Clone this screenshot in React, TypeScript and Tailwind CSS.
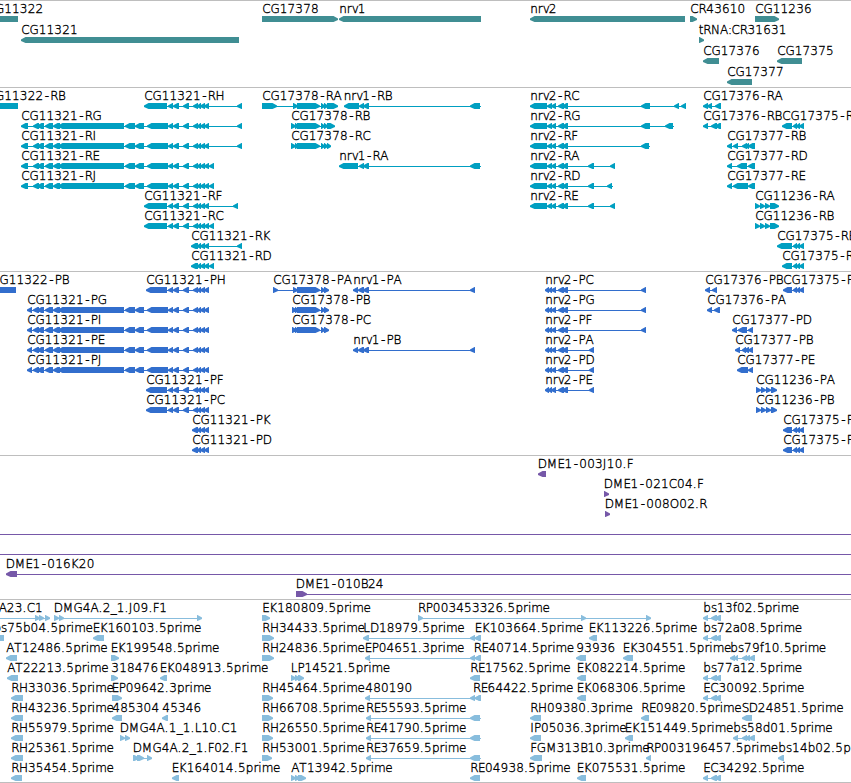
type Span = [number, number];

interface Feature {
  row: number;
  label?: string;
  // label start, when it differs from the first block
  at?: number;
  dir?: 'left' | 'right' | 'none';
  blocks: Span[];
  line?: Span;
}

interface TrackData {
  id: string;
  color: string;
  pitch: number;
  height: string;
  features: Feature[];
}

// Horizontal advance of every glyph used in the labels, at 12px
const ADVANCE: Record<string, number> = {
  A: 8, B: 7.2, C: 8.3, D: 9, E: 6.9, F: 6.5, G: 9.1, H: 9, I: 3.6, J: 4, K: 8,
  L: 6.6, M: 10.8, N: 9, O: 9.5, P: 7, R: 7.7, S: 7, T: 7.6,
  a: 7, b: 7.6, d: 7.6, e: 7, f: 4.2, i: 3.4, m: 11.2, n: 7.5, p: 7.6, r: 4.9,
  s: 6.2, t: 4.4, v: 6, '-': 7, '.': 4.3, ':': 3.6, _: 6,
};
const DIGIT = 7.83;

function glyphPositions(text: string, start: number) {
  let x = start + 0.3;
  return text
    .split('')
    .map((c) => {
      // the hyphen sits in the middle of its wide slot
      const pos = c === '-' ? x + 1.4 : x;
      x += ADVANCE[c] ?? DIGIT;
      return pos.toFixed(2);
    })
    .join(' ');
}

// Exon groups shared between transcripts
const longHead: Span[] = [[33, 39], [37, 44], [45, 53], [53, 60], [58, 124], [125, 135], [135, 144], [147, 168]];
const mid: Span[] = [[168, 173], [173, 179], [183, 189]];
const cluster: Span[] = [[197, 201], [200, 205], [204, 209]];
const tail: Span[] = [...mid, [193, 198], ...cluster];
const nrv2: Span[] = [[547, 552], [551, 556], [558, 564], [562, 568]];
const nrv2P: Span[] = [[545, 549], [548, 552], [551, 556], [558, 564], [562, 568]];
const c78: Span[] = [[297, 320], [321, 325], [324, 328]];
const c75: Span[] = [[793, 797], [796, 800], [799, 804]];
const c36: Span[] = [[755, 760], [760, 765], [765, 770], [770, 779]];
const c36P: Span[] = [[756, 761], [761, 766], [766, 771], [771, 777]];
const bs: Span[] = [[703, 708], [711, 717], [715, 721]];
const bsEnd: Span[] = [[742, 747], [745, 750], [749, 755]];

const tracks: TrackData[] = [
  {
    id: 'genes',
    color: '#408e93',
    pitch: 21,
    height: 'h-[87px]',
    features: [
      { row: 0, label: 'CG11322', at: -13.5, dir: 'none', blocks: [[-13, 18]] },
      { row: 1, label: 'CG11321', blocks: [[21, 239]] },
      { row: 0, label: 'CG17378', dir: 'right', blocks: [[262, 338]] },
      { row: 0, label: 'nrv1', blocks: [[339, 481]] },
      { row: 0, label: 'nrv2', blocks: [[530, 685]] },
      { row: 0, label: 'CR43610', dir: 'right', blocks: [[690, 697]] },
      { row: 0, label: 'CG11236', dir: 'right', blocks: [[755, 779]] },
      { row: 1, label: 'tRNA:CR31631', at: 698.5, dir: 'right', blocks: [[699, 704]] },
      { row: 2, label: 'CG17376', blocks: [[703, 719]] },
      { row: 2, label: 'CG17375', blocks: [[777, 802]] },
      { row: 3, label: 'CG17377', blocks: [[727, 752]] },
    ],
  },
  {
    id: 'transcripts',
    color: '#009fc1',
    pitch: 20,
    height: 'h-[184px]',
    features: [
      { row: 0, label: 'CG11322-RB', at: -13.5, dir: 'none', blocks: [[-13, 18]] },
      { row: 0, label: 'CG11321-RH', blocks: [[144, 167], ...tail, [237, 242]] },
      { row: 1, label: 'CG11321-RG', blocks: [[21, 28], ...longHead, ...tail, [237, 242]] },
      { row: 2, label: 'CG11321-RI', blocks: [[21, 28], ...longHead, ...tail, [237, 242]] },
      { row: 3, label: 'CG11321-RE', blocks: [[21, 28], ...longHead, ...tail, [209, 214]] },
      { row: 4, label: 'CG11321-RJ', blocks: [[21, 28], ...longHead, ...tail, [209, 214]] },
      { row: 5, label: 'CG11321-RF', blocks: [[144, 167], ...tail, [233, 238]] },
      { row: 6, label: 'CG11321-RC', blocks: [[144, 167], ...tail, [209, 214]] },
      { row: 7, label: 'CG11321-RK', blocks: [[191, 198], ...cluster, [237, 242]] },
      { row: 8, label: 'CG11321-RD', blocks: [[191, 198], ...cluster, [209, 214]] },
      { row: 0, label: 'CG17378-RA', dir: 'right', blocks: [[262, 277], [293, 298], ...c78, [327, 338]] },
      { row: 1, label: 'CG17378-RB', dir: 'right', blocks: [[291, 296], [295, 299], ...c78, [327, 335]] },
      { row: 2, label: 'CG17378-RC', dir: 'right', blocks: [[291, 296], [295, 299], ...c78, [327, 331]] },
      { row: 0, label: 'nrv1-RB', at: 343.5, blocks: [[344, 359], [359, 364], [363, 369], [470, 480]], line: [344, 481] },
      { row: 3, label: 'nrv1-RA', blocks: [[339, 358], [359, 364], [363, 369], [470, 480]], line: [339, 481] },
      { row: 0, label: 'nrv2-RC', blocks: [[530, 547], ...nrv2, [641, 650], [674, 679], [681, 686]] },
      { row: 1, label: 'nrv2-RG', blocks: [[530, 547], ...nrv2, [641, 650], [665, 673]], line: [530, 674] },
      { row: 2, label: 'nrv2-RF', blocks: [[530, 547], ...nrv2, [641, 649]], line: [530, 650] },
      { row: 3, label: 'nrv2-RA', blocks: [[530, 547], ...nrv2, [588, 594], [610, 615]] },
      { row: 4, label: 'nrv2-RD', blocks: [[530, 547], ...nrv2, [588, 594], [607, 612]], line: [530, 613] },
      { row: 5, label: 'nrv2-RE', blocks: [[530, 547], ...nrv2, [588, 594], [610, 615]] },
      { row: 0, label: 'CG17376-RA', blocks: [[703, 708], [707, 712], [715, 721]] },
      { row: 1, label: 'CG17376-RB', blocks: [[703, 708], [711, 717], [715, 721]] },
      { row: 1, label: 'CG17375-RA', blocks: [[782, 792], ...c75] },
      { row: 2, label: 'CG17377-RB', blocks: [[727, 732], [733, 738], [742, 747], [745, 749], [748, 755]] },
      { row: 3, label: 'CG17377-RD', blocks: [[727, 732], [737, 747], [748, 755]] },
      { row: 4, label: 'CG17377-RE', blocks: [[727, 732], [733, 748], [748, 755]] },
      { row: 5, label: 'CG11236-RA', dir: 'right', blocks: c36 },
      { row: 6, label: 'CG11236-RB', dir: 'right', blocks: c36 },
      { row: 7, label: 'CG17375-RB', blocks: [[777, 792], ...c75] },
      { row: 8, label: 'CG17375-RC', blocks: [[782, 792], ...c75] },
    ],
  },
  {
    id: 'proteins',
    color: '#326ecd',
    pitch: 20,
    height: 'h-[184px]',
    features: [
      { row: 0, label: 'CG11322-PB', at: -9, dir: 'none', blocks: [[-9, 16]] },
      { row: 0, label: 'CG11321-PH', blocks: [[146, 167], ...tail] },
      { row: 1, label: 'CG11321-PG', blocks: [[27, 32], ...longHead, ...tail] },
      { row: 2, label: 'CG11321-PI', blocks: [[27, 32], ...longHead, ...tail] },
      { row: 3, label: 'CG11321-PE', blocks: [[27, 32], ...longHead, ...tail] },
      { row: 4, label: 'CG11321-PJ', blocks: [[27, 32], ...longHead, ...tail] },
      { row: 5, label: 'CG11321-PF', blocks: [[146, 167], ...tail] },
      { row: 6, label: 'CG11321-PC', blocks: [[146, 167], ...tail] },
      { row: 7, label: 'CG11321-PK', blocks: [[192, 198], ...cluster] },
      { row: 8, label: 'CG11321-PD', blocks: [[192, 198], ...cluster] },
      { row: 0, label: 'CG17378-PA', dir: 'right', blocks: [[273, 278], [293, 298], ...c78, [324, 329]] },
      { row: 1, label: 'CG17378-PB', dir: 'right', blocks: [[292, 297], [295, 299], ...c78, [324, 329]] },
      { row: 2, label: 'CG17378-PC', dir: 'right', blocks: [[292, 297], [295, 299], ...c78, [324, 329]] },
      { row: 0, label: 'nrv1-PA', blocks: [[353, 358], [358, 364], [363, 369], [470, 475]] },
      { row: 3, label: 'nrv1-PB', blocks: [[353, 358], [358, 364], [363, 369], [470, 475]] },
      { row: 0, label: 'nrv2-PC', blocks: [...nrv2P, [641, 646]] },
      { row: 1, label: 'nrv2-PG', blocks: [...nrv2P, [641, 646]] },
      { row: 2, label: 'nrv2-PF', blocks: [...nrv2P, [641, 646]] },
      { row: 3, label: 'nrv2-PA', blocks: [...nrv2P, [589, 594]] },
      { row: 4, label: 'nrv2-PD', blocks: [...nrv2P, [589, 594]] },
      { row: 5, label: 'nrv2-PE', blocks: [...nrv2P, [589, 594]] },
      { row: 0, label: 'CG17376-PB', blocks: [[705, 710], [712, 717]] },
      { row: 0, label: 'CG17375-PA', blocks: [[783, 792], ...c75] },
      { row: 1, label: 'CG17376-PA', blocks: [[707, 712], [714, 720]] },
      { row: 2, label: 'CG17377-PD', blocks: [[732, 737], [738, 747], [748, 753]] },
      { row: 3, label: 'CG17377-PB', blocks: [[735, 740], [742, 746], [744, 749], [748, 753]] },
      { row: 4, label: 'CG17377-PE', blocks: [[737, 748], [748, 753]] },
      { row: 5, label: 'CG11236-PA', dir: 'right', blocks: c36P },
      { row: 6, label: 'CG11236-PB', dir: 'right', blocks: c36P },
      { row: 7, label: 'CG17375-PB', blocks: [[783, 792], ...c75] },
      { row: 8, label: 'CG17375-PC', blocks: [[783, 792], ...c75] },
    ],
  },
  {
    id: 'clones',
    color: '#7658a8',
    pitch: 20,
    height: 'h-[144px]',
    features: [
      { row: 0, label: 'DME1-003J10.F', at: 537.5, blocks: [[538, 546]] },
      { row: 1, label: 'DME1-021C04.F', at: 603.5, dir: 'right', blocks: [[604, 609]] },
      { row: 2, label: 'DME1-008O02.R', at: 604.5, dir: 'right', blocks: [[605, 610]] },
      { row: 3, blocks: [], line: [0, 851] },
      { row: 4, blocks: [], line: [0, 851] },
      { row: 5, label: 'DME1-016K20', at: 5.5, blocks: [[6, 17]], line: [6, 851] },
      { row: 6, label: 'DME1-010B24', at: 295.5, dir: 'right', blocks: [[296, 307]], line: [296, 851] },
    ],
  },
  {
    id: 'ests',
    color: '#88bddd',
    pitch: 20,
    height: 'h-[183px]',
    features: [
      { row: 0, label: 'A23.C1', at: -1.5, dir: 'right', blocks: [[35, 40], [39, 44], [45, 50]], line: [0, 50] },
      { row: 0, label: 'DMG4A.2_1.J09.F1', at: 53.5, dir: 'right', blocks: [[54, 59], [59, 64], [197, 202]] },
      { row: 0, label: 'EK180809.5prime', dir: 'right', blocks: [[262, 270]] },
      { row: 0, label: 'RP003453326.5prime', at: 417.8, dir: 'right', blocks: [[418, 423], [581, 586], [646, 651]] },
      { row: 0, label: 'bs13f02.5prime', blocks: bs },
      { row: 1, label: 'bs75b04.5prime', at: -6.8, dir: 'none', blocks: [[-7, 4]] },
      { row: 1, label: 'EK160103.5prime', at: 92.5, blocks: [[93, 104]] },
      { row: 1, label: 'RH34433.5prime', dir: 'right', blocks: [[262, 274]] },
      { row: 1, label: 'LD18979.5prime', blocks: [[363, 369], [470, 475], [475, 481]] },
      { row: 1, label: 'EK103664.5prime', at: 474.5, blocks: [[475, 481]] },
      { row: 1, label: 'EK113226.5prime', at: 588.5, blocks: [[589, 597]] },
      { row: 1, label: 'bs72a08.5prime', blocks: bs },
      { row: 2, label: 'AT12486.5prime', blocks: [[6, 17]] },
      { row: 2, label: 'EK199548.5prime', at: 110.5, dir: 'right', blocks: [[111, 119]] },
      { row: 2, label: 'RH24836.5prime', dir: 'right', blocks: [[262, 274]] },
      { row: 2, label: 'EP04651.3prime', at: 364.5, blocks: [[365, 370], [470, 475], [475, 481]] },
      { row: 2, label: 'RE40714.5prime', at: 473.5, blocks: [[475, 481]] },
      { row: 2, label: '93936', blocks: [[576, 586]] },
      { row: 2, label: 'EK304551.5prime', at: 622.5, blocks: [[623, 633]] },
      { row: 2, label: 'bs79f10.5prime', blocks: [[730, 735], [734, 738], ...bsEnd] },
      { row: 3, label: 'AT22213.5prime', blocks: [[7, 18]] },
      { row: 3, label: '318476', dir: 'right', blocks: [[111, 118]] },
      { row: 3, label: 'EK048913.5prime', at: 159.5, blocks: [[160, 167]] },
      { row: 3, label: 'LP14521.5prime', at: 290.5, dir: 'right', blocks: [[291, 296], [295, 300], [298, 304]] },
      { row: 3, label: 'RE17562.5prime', blocks: [[470, 480]] },
      { row: 3, label: 'EK082214.5prime', at: 576.5, blocks: [[577, 586]] },
      { row: 3, label: 'bs77a12.5prime', blocks: bs },
      { row: 4, label: 'RH33036.5prime', blocks: [[11, 23]] },
      { row: 4, label: 'EP09642.3prime', at: 111.5, dir: 'right', blocks: [[112, 122]] },
      { row: 4, label: 'RH45464.5prime', dir: 'right', blocks: [[262, 273]] },
      { row: 4, label: '480190', blocks: [[365, 370], [470, 475], [475, 481]] },
      { row: 4, label: 'RE64422.5prime', at: 472.7, blocks: [[475, 481]] },
      { row: 4, label: 'EK068306.5prime', at: 576.5, blocks: [[577, 586]] },
      { row: 4, label: 'EC30092.5prime', blocks: bs },
      { row: 5, label: 'RH43236.5prime', blocks: [[11, 23]] },
      { row: 5, label: '485304', blocks: [[112, 122]] },
      { row: 5, label: '45346', blocks: [[162, 168]] },
      { row: 5, label: 'RH66708.5prime', dir: 'right', blocks: [[262, 273]] },
      { row: 5, label: 'RE55593.5prime', at: 365.7, blocks: [[366, 371], [470, 480]], line: [366, 481] },
      { row: 5, label: 'RH09380.3prime', blocks: [[530, 541]] },
      { row: 5, label: 'RE09820.5prime', blocks: [[641, 649]] },
      { row: 5, label: 'SD24851.5prime', at: 741.5, blocks: [[742, 752]] },
      { row: 6, label: 'RH55979.5prime', blocks: [[11, 23]] },
      { row: 6, label: 'DMG4A.1_1.L10.C1', at: 119.5, dir: 'right', blocks: [[120, 125], [125, 130]] },
      { row: 6, label: 'RH26550.5prime', dir: 'right', blocks: [[262, 273]] },
      { row: 6, label: 'RE41790.5prime', at: 365.7, blocks: [[366, 371], [470, 480]], line: [366, 481] },
      { row: 6, label: 'IP05036.3prime', blocks: [[530, 541]] },
      { row: 6, label: 'EK151449.5prime', at: 624.5, blocks: [[625, 633]] },
      { row: 6, label: 'bs58d01.5prime', blocks: [[733, 738], ...bsEnd] },
      { row: 7, label: 'RH25361.5prime', blocks: [[11, 23]] },
      { row: 7, label: 'DMG4A.2_1.F02.F1', at: 132.5, dir: 'right', blocks: [[133, 139], [137, 144], [147, 152]] },
      { row: 7, label: 'RH53001.5prime', dir: 'right', blocks: [[262, 272]] },
      { row: 7, label: 'RE37659.5prime', at: 365.7, blocks: [[366, 371], [470, 480]], line: [366, 481] },
      { row: 7, label: 'FGM313B10.3prime', blocks: [[530, 542]] },
      { row: 7, label: 'RP003196457.5prime', blocks: [[646, 651]] },
      { row: 7, label: 'bs14b02.5prime', blocks: [[778, 784]] },
      { row: 8, label: 'RH35454.5prime', blocks: [[11, 22]] },
      { row: 8, label: 'EK164014.5prime', at: 171.5, blocks: [[172, 179]] },
      { row: 8, label: 'AT13942.5prime', dir: 'right', blocks: [[291, 296], [295, 300], [298, 306]] },
      { row: 8, label: 'RE04938.5prime', blocks: [[470, 480]] },
      { row: 8, label: 'EK075531.5prime', at: 576.5, blocks: [[577, 586]] },
      { row: 8, label: 'EC34292.5prime', blocks: bs },
    ],
  },
];

function blockPath([x0, x1]: Span, y: number, dir: Feature['dir']) {
  if (dir === 'none') {
    return `M${x0} ${y}H${x1}V${y + 6}H${x0}Z`;
  }
  const head = Math.min(5, x1 - x0);
  if (dir === 'right') {
    return `M${x0} ${y}H${x1 - head + 0.5}L${x1} ${y + 2.4}V${y + 4}L${x1 - head + 0.5} ${y + 6}H${x0}Z`;
  }
  return `M${x1} ${y}H${x0 + head - 0.5}L${x0} ${y + 2.4}V${y + 4}L${x0 + head - 0.5} ${y + 6}H${x1}Z`;
}

function FeatureGlyph({ feature, pitch }: { feature: Feature; pitch: number }) {
  const { row, label, at, dir = 'left', blocks } = feature;
  const top = 15 + row * pitch;
  const line = feature.line ?? [blocks[0][0], blocks[blocks.length - 1][1]];

  return (
    <g>
      <rect x={line[0]} y={top + 3} width={line[1] - line[0]} height={1} />
      {blocks.map((block, i) => (
        <path key={i} d={blockPath(block, top, dir)} />
      ))}
      {label && (
        <text
          x={glyphPositions(label, at ?? blocks[0][0])}
          y={top - 3}
          className="fill-black stroke-black stroke-[0.35px] text-[12px] font-extralight"
        >
          {label}
        </text>
      )}
    </g>
  );
}

function Track({ track }: { track: TrackData }) {
  return (
    <section className={`w-full overflow-hidden border-t border-[#bebebe] ${track.height}`}>
      <svg className="block h-full w-full" fill={track.color} aria-label={track.id}>
        {track.features.map((feature, i) => (
          <FeatureGlyph key={i} feature={feature} pitch={track.pitch} />
        ))}
      </svg>
    </section>
  );
}

export default function App() {
  return (
    <main className="flex h-[783px] w-[851px] flex-col overflow-hidden border-b border-[#bebebe] bg-white font-['DejaVu_Sans',sans-serif]">
      {tracks.map((track) => (
        <Track key={track.id} track={track} />
      ))}
    </main>
  );
}
